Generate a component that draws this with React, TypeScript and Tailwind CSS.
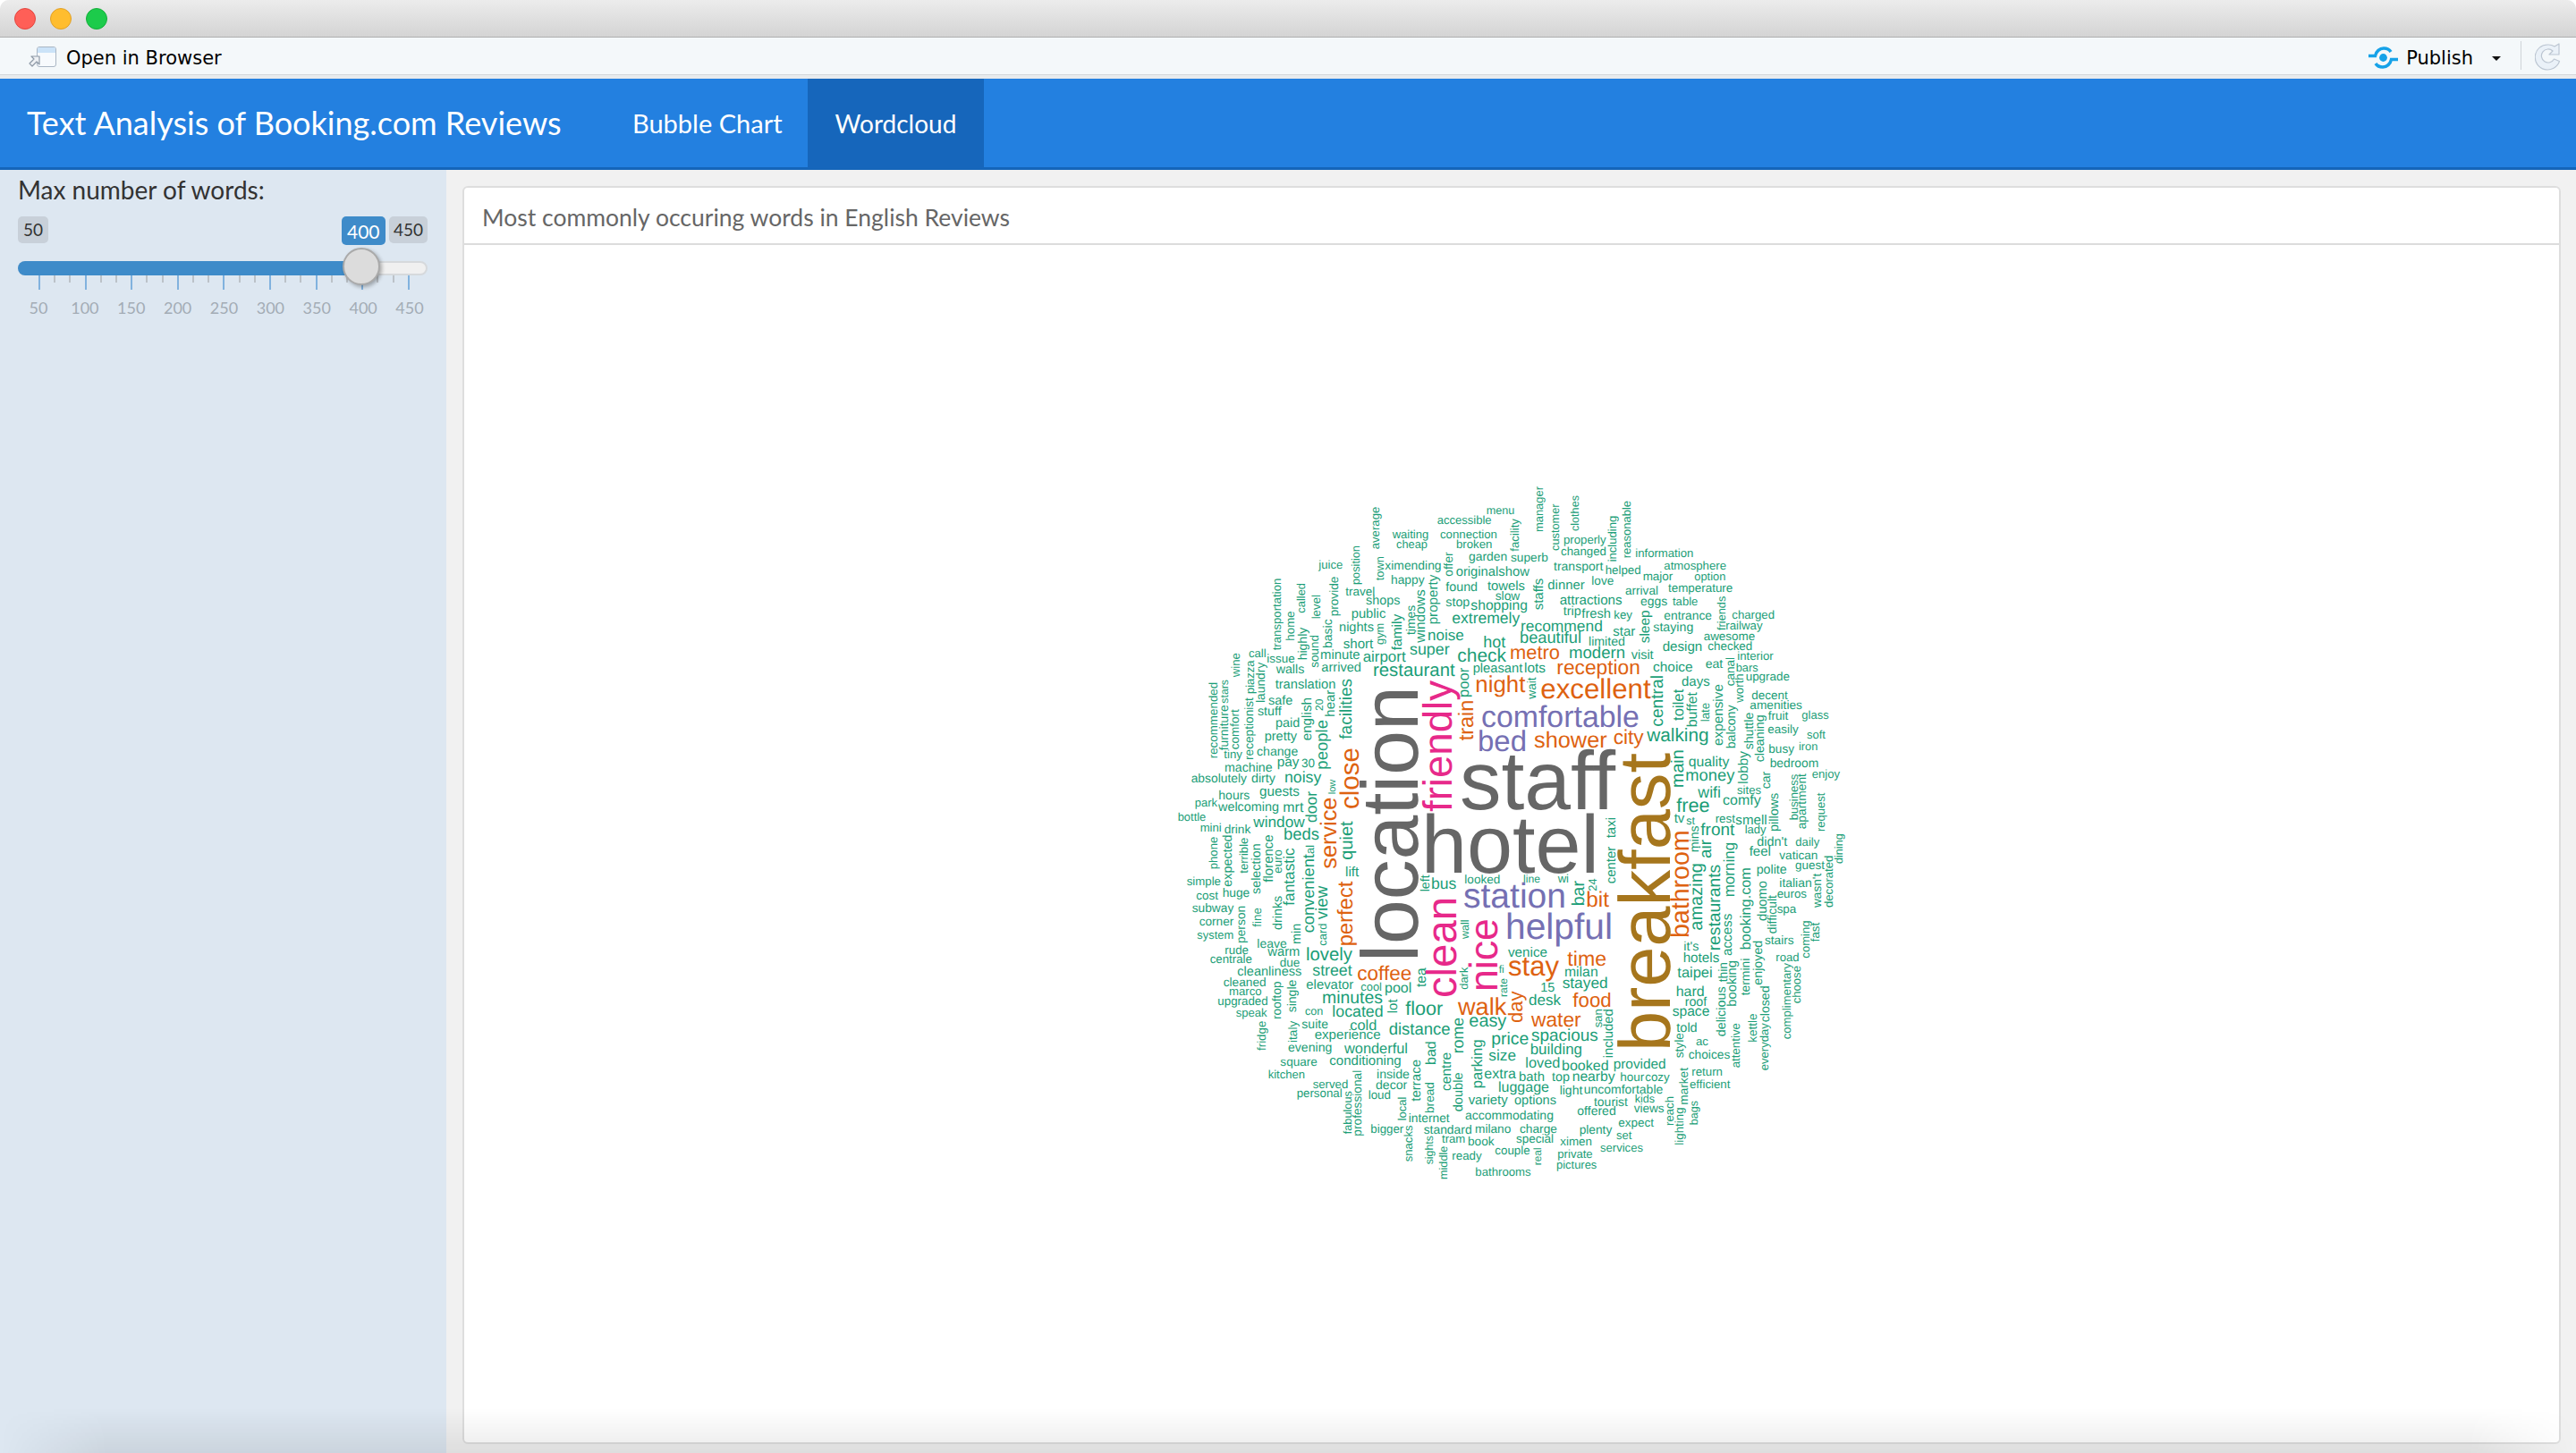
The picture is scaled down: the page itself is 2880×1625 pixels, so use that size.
const TEAL = "#1b9e77";
const ORANGE = "#de6210";
const PURPLE = "#7570b3";
const PINK = "#e7298a";
const GOLD = "#a6761d";
const GRAY = "#666666";

// word, then in crop pixels: horizontal = x1, x2, baseline; vertical (v=1) = baseline, bottom, top
type W = [string, number, number, number, number?, string?];

const topLeft: W[] = [
  ["menu", 1085, 1180, 165], ["accessible", 920, 1103, 198], ["waiting", 770, 892, 245], ["connection", 930, 1122, 246],
  ["cheap", 783, 888, 280], ["broken", 984, 1105, 279], ["garden", 1026, 1156, 320], ["juice", 523, 604, 348],
  ["ximending", 745, 935, 350], ["originalshow", 983, 1230, 372], ["happy", 765, 878, 400], ["found", 949, 1056, 423],
  ["towels", 1089, 1215, 419], ["travel", 613, 712, 438], ["shops", 681, 796, 468], ["slow", 1115, 1198, 452],
  ["stop", 949, 1030, 474], ["shopping", 1033, 1224, 485], ["public", 632, 748, 512], ["extremely", 970, 1198, 530],
  ["nights", 591, 708, 558], ["noise", 888, 1010, 587], ["short", 605, 706, 615], ["hot", 1075, 1150, 612],
  ["super", 828, 962, 637], ["check", 988, 1152, 660], ["minute", 528, 662, 652], ["airport", 671, 815, 660],
  ["arrived", 532, 666, 693], ["issue", 349, 443, 663], ["walls", 380, 475, 699], ["call", 288, 347, 644],
  ["restaurant", 705, 980, 708], ["pleasant", 1040, 1207, 695], ["translation", 377, 580, 750], ["safe", 354, 436, 803],
  ["stuff", 318, 398, 840], ["paid", 378, 460, 880], ["pretty", 341, 450, 925], ["change", 315, 454, 975],
  ["tiny", 205, 267, 983], ["pay", 383, 457, 1010], ["30", 465, 510, 1015], ["machine", 207, 368, 1030],
  ["absolutely", 95, 282, 1064], ["dirty", 297, 378, 1064], ["noisy", 408, 532, 1065], ["hours", 187, 292, 1122],
  ["guests", 324, 459, 1110], ["park", 107, 183, 1146], ["welcoming", 186, 390, 1160], ["mrt", 403, 472, 1165],
  ["bottle", 50, 145, 1195], ["mini", 125, 197, 1230], ["drink", 206, 295, 1237], ["window", 304, 476, 1215],
  ["beds", 405, 525, 1258],
  ["average", 727, 283, 140, 1], ["facility", 1195, 290, 180, 1], ["position", 660, 402, 270, 1], ["town", 742, 388, 306, 1],
  ["offer", 972, 374, 292, 1], ["transportation", 397, 622, 380, 1], ["called", 478, 497, 396, 1], ["provide", 587, 508, 374, 1],
  ["level", 527, 517, 435, 1], ["home", 440, 590, 490, 1], ["property", 920, 535, 368, 1], ["windows", 878, 596, 418, 1],
  ["times", 845, 570, 470, 1], ["family", 800, 622, 500, 1], ["gym", 742, 603, 530, 1], ["basic", 568, 615, 517, 1],
  ["highly", 482, 655, 545, 1], ["sound", 522, 680, 570, 1], ["wine", 258, 712, 630, 1], ["piazza", 305, 768, 655, 1],
  ["laundry", 342, 798, 662, 1], ["recommended", 183, 985, 728, 1], ["stars", 218, 800, 720, 1], ["furniture", 218, 958, 805, 1],
  ["comfort", 255, 955, 820, 1], ["receptionist", 302, 990, 780, 1], ["english", 497, 925, 780, 1], ["20", 538, 825, 785, 1],
  ["hear", 577, 845, 755, 1], ["people", 552, 1022, 855, 1], ["facilities", 633, 920, 717, 1], ["poor", 1025, 780, 680, 1],
  ["train", 1042, 925, 788, 1, ORANGE], ["low", 580, 1105, 1055, 1], ["door", 515, 1200, 1095, 1], ["close", 657, 1155, 948, 1, ORANGE],
  ["night", 1048, 1216, 762, 0, ORANGE],
];

const topRight: W[] = [
  ["properly", 144, 287, 265], ["changed", 135, 288, 303], ["information", 385, 580, 308], ["transport", 111, 277, 353],
  ["helped", 284, 404, 365], ["atmosphere", 481, 690, 350], ["major", 410, 511, 388], ["option", 583, 688, 388],
  ["dinner", 91, 215, 418], ["love", 238, 313, 403], ["arrival", 351, 462, 435], ["temperature", 495, 712, 427],
  ["attractions", 131, 341, 467], ["eggs", 402, 493, 472], ["table", 510, 595, 470], ["trip", 143, 203, 503],
  ["fresh", 205, 303, 513], ["key", 313, 375, 517], ["entrance", 481, 642, 518], ["charged", 709, 852, 515],
  ["railway", 688, 812, 552], ["star", 310, 385, 572], ["staying", 445, 580, 557], ["limited", 228, 351, 605],
  ["awesome", 614, 787, 587], ["design", 476, 610, 625], ["checked", 628, 778, 622], ["modern", 162, 351, 648],
  ["visit", 371, 446, 650], ["interior", 727, 848, 655], ["choice", 444, 578, 692], ["eat", 620, 679, 680],
  ["bars", 722, 797, 692], ["upgrade", 755, 903, 723], ["days", 540, 635, 742], ["decent", 775, 896, 785],
  ["amenities", 769, 945, 820], ["fruit", 830, 898, 855], ["glass", 943, 1034, 852], ["easily", 829, 932, 900],
  ["soft", 960, 1023, 918], ["busy", 832, 918, 965], ["iron", 933, 997, 957], ["walking", 424, 632, 927],
  ["quality", 563, 700, 1012], ["bedroom", 836, 1000, 1013], ["money", 553, 718, 1060], ["enjoy", 977, 1071, 1050],
  ["wifi", 595, 672, 1115], ["sites", 726, 807, 1103], ["comfy", 678, 806, 1140], ["free", 523, 635, 1165],
  ["tv", 515, 550, 1200], ["st", 556, 585, 1205], ["rest", 653, 720, 1200], ["smell", 721, 827, 1207],
  ["front", 604, 718, 1243], ["lady", 752, 824, 1235],
  ["reception", 121, 402, 703, 0, ORANGE], ["excellent", 67, 437, 782, 0, ORANGE], ["shower", 45, 290, 948, 0, ORANGE], ["city", 311, 413, 935, 0, ORANGE],
  ["manager", 76, 225, 72, 1], ["customer", 130, 288, 130, 1], ["clothes", 195, 222, 102, 1], ["including", 320, 325, 170, 1],
  ["reasonable", 369, 313, 120, 1], ["staffs", 75, 487, 380, 1], ["sleep", 432, 598, 487, 1], ["friends", 688, 555, 440, 1],
  ["canal", 718, 742, 645, 1], ["worth", 748, 797, 700, 1], ["central", 478, 878, 705, 1], ["toilet", 545, 858, 752, 1],
  ["buffet", 592, 880, 762, 1], ["late", 632, 862, 797, 1], ["expensive", 677, 942, 735, 1], ["balcony", 720, 952, 805, 1],
  ["shuttle", 780, 955, 830, 1], ["cleaning", 815, 997, 838, 1], ["lobby", 762, 1070, 960, 1], ["main", 545, 1083, 955, 1],
  ["car", 837, 1087, 1028, 1], ["pillows", 865, 1230, 1100, 1], ["business", 930, 1192, 1037, 1], ["apartment", 957, 1222, 1035, 1],
  ["request", 1020, 1230, 1100, 1], ["taxi", 318, 1252, 1182, 1], ["wait", 52, 785, 712, 1],
];

const bottomLeft: W[] = [
  ["lift", 612, 658, 180], ["simple", 80, 195, 210], ["cost", 112, 186, 257], ["huge", 200, 292, 248], ["subway", 98, 238, 300],
  ["corner", 122, 238, 345], ["system", 115, 238, 390], ["leave", 316, 416, 420], ["rude", 208, 288, 440], ["warm", 352, 460, 447],
  ["centrale", 158, 300, 470], ["due", 392, 460, 482], ["cleanliness", 250, 466, 513], ["lovely", 480, 636, 462],
  ["street", 502, 635, 512], ["cleaned", 203, 347, 550], ["elevator", 481, 640, 558], ["marco", 222, 332, 578],
  ["cool", 664, 735, 565], ["pool", 744, 835, 570], ["minutes", 534, 738, 605], ["upgraded", 184, 353, 613],
  ["speak", 245, 350, 652], ["con", 477, 538, 645], ["located", 568, 740, 652], ["floor", 814, 940, 645],
  ["suite", 466, 555, 690], ["cold", 628, 718, 695], ["experience", 509, 731, 727], ["distance", 758, 965, 712],
  ["evening", 420, 568, 767], ["wonderful", 609, 822, 773], ["square", 394, 519, 815], ["conditioning", 559, 800, 812],
  ["kitchen", 353, 477, 858], ["inside", 717, 828, 858], ["decor", 714, 820, 893], ["served", 503, 622, 892],
  ["personal", 449, 602, 920], ["loud", 689, 765, 926], ["size", 1093, 1185, 797], ["price", 1102, 1228, 745],
  ["extra", 1078, 1185, 858], ["easy", 1027, 1153, 683], ["fi", 1127, 1145, 505], ["bus", 900, 985, 222],
  ["looked", 1012, 1132, 203], ["variety", 1025, 1157, 945], ["milano", 1047, 1168, 1040], ["standard", 875, 1037, 1043],
  ["internet", 824, 962, 1006], ["tram", 936, 1015, 1073], ["book", 1023, 1112, 1083], ["couple", 1114, 1232, 1112],
  ["ready", 970, 1070, 1130], ["bathrooms", 1048, 1235, 1185], ["bigger", 697, 808, 1040],
  ["coffee", 652, 835, 528, 0, ORANGE], ["walk", 990, 1153, 645, 0, ORANGE],
  ["phone", 182, 157, 47, 1], ["expected", 232, 215, 40, 1], ["terrible", 285, 170, 50, 1], ["selection", 327, 240, 70, 1],
  ["florence", 370, 200, 40, 1], ["euro", 398, 170, 90, 1], ["fantastic", 440, 278, 85, 1], ["convenient", 507, 370, 105, 1],
  ["al", 507, 105, 75, 1], ["view", 553, 325, 212, 1], ["person", 275, 405, 278, 1], ["fine", 330, 350, 285, 1],
  ["drinks", 398, 360, 245, 1], ["min", 462, 408, 338, 1], ["card", 550, 413, 338, 1], ["lot", 785, 640, 592, 1],
  ["rooftop", 395, 660, 532, 1], ["single", 447, 637, 527, 1], ["fridge", 345, 765, 665, 1], ["italy", 450, 738, 665, 1],
  ["fabulous", 632, 1045, 900, 1], ["professional", 667, 1052, 830, 1], ["terrace", 865, 935, 795, 1], ["bad", 915, 813, 733, 1],
  ["bread", 910, 975, 870, 1], ["centre", 965, 900, 770, 1], ["rome", 1007, 775, 653, 1], ["double", 1005, 970, 838, 1],
  ["parking", 1072, 892, 727, 1], ["wall", 1025, 390, 325, 1], ["dark", 1022, 560, 485, 1], ["rate", 1155, 585, 522, 1],
  ["tea", 882, 552, 487, 1], ["left", 893, 232, 175, 1], ["sights", 905, 1147, 1050, 1], ["middle", 953, 1197, 1085, 1],
  ["snacks", 838, 1138, 1015, 1], ["local", 815, 1000, 920, 1],
  ["perfect", 637, 415, 197, 1, ORANGE], ["service", 582, 155, -85, 1, ORANGE], ["quiet", 637, 125, -5, 1],
  ["day", 1205, 672, 565, 1, ORANGE],
];

const bottomRight: W[] = [
  ["wi", 125, 162, 200], ["desk", 27, 135, 612], ["15", 67, 115, 567], ["milan", 147, 260, 515], ["stayed", 140, 293, 555],
  ["spacious", 36, 260, 733], ["building", 32, 207, 778], ["loved", 16, 133, 823], ["booked", 138, 296, 832],
  ["provided", 311, 488, 825], ["top", 105, 165, 867], ["nearby", 173, 317, 866], ["hour", 334, 415, 866], ["cozy", 418, 500, 866],
  ["light", 131, 208, 912], ["uncomfortable", 212, 478, 908], ["tourist", 246, 360, 950], ["kids", 383, 450, 940],
  ["views", 380, 482, 972], ["offered", 190, 320, 980], ["expect", 328, 447, 1020], ["plenty", 197, 307, 1043],
  ["set", 321, 373, 1062], ["ximen", 133, 240, 1083], ["private", 124, 242, 1125], ["services", 267, 411, 1103],
  ["pictures", 120, 256, 1160], ["it's", 547, 598, 430], ["hotels", 545, 667, 468], ["taipei", 526, 644, 520],
  ["polite", 791, 893, 170], ["didn't", 793, 895, 77], ["feel", 767, 840, 110], ["daily", 922, 1003, 78],
  ["vatican", 868, 997, 122], ["guest", 921, 1020, 155], ["italian", 868, 977, 217], ["euros", 860, 960, 252],
  ["spa", 860, 925, 303], ["stairs", 819, 917, 407], ["road", 856, 935, 465], ["hard", 521, 617, 582], ["roof", 551, 625, 615],
  ["space", 509, 634, 648], ["told", 523, 593, 703], ["ac", 588, 630, 747], ["choices", 563, 703, 792], ["return", 574, 678, 848],
  ["efficient", 567, 703, 890],
  ["bit", 220, 297, 282, 0, ORANGE], ["time", 157, 288, 480, 0, ORANGE], ["food", 175, 305, 617, 0, ORANGE], ["water", 36, 203, 683, 0, ORANGE],
  ["bar", 213, 280, 195, 1], ["24", 255, 230, 187, 1], ["center", 318, 205, 80, 1], ["included", 310, 790, 625, 1], ["san", 272, 688, 625, 1],
  ["amazing", 610, 362, 135, 1], ["air", 640, 120, 57, 1], ["mins", 597, 100, 10, 1], ["morning", 718, 250, 65, 1],
  ["restaurants", 670, 430, 140, 1], ["access", 708, 447, 305, 1], ["booking.com", 770, 427, 150, 1], ["thin", 692, 535, 468, 1],
  ["delicious", 688, 718, 550, 1], ["booking", 723, 617, 462, 1], ["termini", 768, 580, 455, 1], ["duomo", 825, 330, 195, 1],
  ["difficult", 858, 373, 243, 1], ["wasn't", 1007, 285, 170, 1], ["decorated", 1047, 285, 110, 1], ["dining", 1080, 138, 37, 1],
  ["coming", 968, 455, 328, 1], ["fast", 1002, 400, 335, 1], ["enjoyed", 810, 545, 395, 1], ["complimentary", 905, 727, 470, 1],
  ["choose", 940, 607, 480, 1], ["closed", 833, 670, 547, 1], ["everyday", 830, 832, 672, 1], ["kettle", 792, 737, 640, 1],
  ["attentive", 735, 823, 672, 1], ["style", 547, 790, 705, 1], ["market", 560, 947, 822, 1], ["reach", 512, 1017, 918, 1],
  ["lighting", 547, 1082, 955, 1], ["bags", 595, 1015, 933, 1], ["real", 70, 1150, 1090, 1],
  ["bathroom", 563, 387, 25, 1, ORANGE],
];

// these run over two crops, so they are in page pixels
const page: W[] = [
  ["superb", 1689, 1731, 628], ["lots", 1704, 1728, 752], ["recommend", 1700, 1792, 706], ["beautiful", 1699, 1768, 719],
  ["line", 1703, 1722, 987], ["venice", 1686, 1730, 1070], ["bath", 1698, 1727, 1209], ["luggage", 1675, 1732, 1221],
  ["options", 1693, 1740, 1235], ["accommodating", 1638, 1737, 1252], ["charge", 1699, 1741, 1267], ["special", 1695, 1737, 1278],
  ["metro", 1688, 1744, 737, 0, ORANGE], ["stay", 1686, 1743, 1091, 0, ORANGE],
  ["comfortable", 1656, 1833, 813, 0, PURPLE], ["bed", 1652, 1707, 840, 0, PURPLE], ["station", 1636, 1751, 1015, 0, PURPLE], ["helpful", 1683, 1803, 1050, 0, PURPLE],
  ["staff", 1632, 1806, 905, 0, GRAY], ["hotel", 1589, 1788, 976, 0, GRAY],
  ["location", 1585, 1076, 767, 1, GRAY], ["breakfast", 1867, 1176, 842, 1, GOLD],
  ["friendly", 1623, 908, 761, 1, PINK], ["clean", 1628, 1116, 1003, 1, PINK], ["nice", 1674, 1109, 1027, 1, PINK],
];

const ctx = document.createElement("canvas").getContext("2d")!;
ctx.font = '100px "Liberation Sans"';

function place(words: W[], ox: number, oy: number, k: number) {
  return words.map(([text, a, b, c, v, color]) => {
    const len = v ? (b - c) / k : (b - a) / k;
    const size = (len / ctx.measureText(text).width) * 100;
    const x = ox + a / k;
    const y = v ? oy + b / k : oy + c / k;
    return { text, x, y, size, v: !!v, color: color || TEAL };
  });
}

const words = [
  ...place(topLeft, 1300, 520, 3),
  ...place(topRight, 1700, 520, 3),
  ...place(bottomLeft, 1300, 920, 3),
  ...place(bottomRight, 1700, 920, 3),
  ...place(page, 0, 0, 1),
];

const tickLabels = [50, 100, 150, 200, 250, 300, 350, 400, 450];
const ticks = Array.from({ length: 25 }, (_, i) => i);

function BrowserIcon() {
  return (
    <svg width="32" height="26" viewBox="0 0 32 26">
      <rect x="9.5" y="1.5" width="21" height="22" rx="2.5" fill="#f7fafd" stroke="#aab6c4" />
      <path d="M10 8V4a2 2 0 0 1 2-2h16a2 2 0 0 1 2 2v4z" fill="#cbe3f8" />
      <path d="M1 20l5-5-3-3h9v9l-3-3-5 5z" fill="#eef1f4" stroke="#8e99a6" strokeWidth="1.2" strokeLinejoin="round" />
    </svg>
  );
}

function PublishIcon() {
  return (
    <svg width="33" height="25" viewBox="0 0 33 25" fill="none" stroke="#16a2e8" strokeWidth="3.5">
      <circle cx="16.5" cy="12.5" r="4.4" fill="#16a2e8" stroke="none" />
      <path d="M0 10.5h7.5c1-5 5-8.5 9.5-8.5 3.5 0 6.5 1.5 8 4" />
      <path d="M33 14.5h-7.5c-1 5-5 8.5-9.5 8.5-3.5 0-6.5-1.5-8-4" />
    </svg>
  );
}

function RefreshIcon() {
  return (
    <svg width="30" height="32" viewBox="0 0 30 32">
      <path
        d="M15 3a13 13 0 0 1 7 2l5-3v12H16l4-4a7.5 7.5 0 1 0 1.5 9l6 2.5A14 14 0 1 1 15 3z"
        fill="#eaf1f8"
        stroke="#bcc6d2"
        strokeWidth="1.2"
        strokeLinejoin="round"
      />
    </svg>
  );
}

function Slider() {
  return (
    <div className="relative ml-[20px] w-[458px]">
      <div className="flex h-[30px] justify-between text-[19px] leading-[30px] text-[#333]">
        <span className="rounded-[5px] bg-[#c8d0d9] px-[6px]">50</span>
        <span className="rounded-[5px] bg-[#c8d0d9] px-[5px]">450</span>
      </div>
      <span className="absolute left-[362px] top-0 h-[32px] rounded-[5px] bg-[#3e8bc9] px-[6px] text-[21px] leading-[33px] text-white">400</span>
      <div className="mt-[20px] h-[16px] rounded-full border-2 border-[#d6d9dc] bg-[#f0f0f0]">
        <div className="-m-[2px] h-[16px] w-[384px] rounded-l-full bg-[#3e8bc9]" />
      </div>
      <div className="ml-[23px] flex w-[415px] justify-between">
        {ticks.map((i) =>
          i % 3 === 0 ? (
            <div key={i} className="h-[16px] w-[2px] bg-[#81b2de]" />
          ) : (
            <div key={i} className="h-[8px] w-[2px] bg-[#bcc2c8]" />
          ),
        )}
      </div>
      <div className="ml-[23px] mt-[9px] flex w-[415px] justify-between text-[18px] leading-[22px] text-[#a3acb5]">
        {tickLabels.map((t) => (
          <span key={t} className="flex w-0 justify-center">
            {t}
          </span>
        ))}
      </div>
      <div className="absolute left-[363px] top-[35px] h-[42px] w-[42px] rounded-full border-2 border-[#aaa] bg-[#dcdcdc] shadow-[2px_2px_4px_rgba(0,0,0,0.3)]" />
    </div>
  );
}

export default function App() {
  return (
    <div className="relative flex h-[1625px] w-[2880px] flex-col overflow-hidden rounded-t-[10px] bg-[#f1f1f1] font-['Lato',sans-serif]">
      <div className="flex h-[42px] items-center gap-[16px] border-b border-[#aeaeae] bg-gradient-to-b from-[#ececec] to-[#d4d4d4] pl-[16px]">
        <div className="h-[24px] w-[24px] rounded-full border border-[#e2463f] bg-[#ff5f57]" />
        <div className="h-[24px] w-[24px] rounded-full border border-[#e0a028] bg-[#ffbd2e]" />
        <div className="h-[24px] w-[24px] rounded-full border border-[#14ae3a] bg-[#1ccb4b]" />
      </div>

      <div className="flex h-[46px] items-start border-b-[4px] border-[#e8ebed] bg-[#f4f8fa] shadow-[inset_0_-1px_0_#d3d8db]">
        <div className="ml-[32px] mt-[9px]">
          <BrowserIcon />
        </div>
        <span className="ml-[10px] mt-[10px] font-['DejaVu_Sans',sans-serif] text-[21px] leading-[26px] text-black">Open in Browser</span>
        <div className="ml-auto mt-[10px]">
          <PublishIcon />
        </div>
        <span className="ml-[9px] mt-[10px] font-['DejaVu_Sans',sans-serif] text-[21px] leading-[26px] text-black">Publish</span>
        <div className="ml-[21px] mt-[21px] h-0 w-0 border-x-[5px] border-t-[5px] border-x-transparent border-t-[#111]" />
        <div className="ml-[22px] mt-[4px] h-[32px] w-[1px] bg-[#cfd4d8]" />
        <div className="ml-[15px] mt-[5px] mr-[16px]">
          <RefreshIcon />
        </div>
      </div>

      <div className="flex h-[102px] items-stretch border-b-[3px] border-[#1565b9] bg-[#2380e0] text-white">
        <div className="ml-[30px] pt-[26px] text-[36px] leading-[46px]">Text Analysis of Booking.com Reviews</div>
      </div>

      <div className="flex flex-1">
        <aside className="w-[499px] bg-[#dde7f1] pt-[5px]">
          <div className="ml-[20px] text-[28px] leading-[34px] text-[#333]">Max number of words:</div>
          <div className="mt-[13px]">
            <Slider />
          </div>
        </aside>

        <main className="flex-1 pl-[18px] pr-[17px] pt-[18px] pb-[10px]">
          <div className="flex h-full flex-col rounded-[6px] border-2 border-[#dedede] bg-white">
            <div className="h-[64px] border-b-2 border-[#dcdcdc] pl-[20px] pt-[16px] text-[26.5px] leading-[34px] text-[#666]">
              Most commonly occuring words in English Reviews
            </div>
            <div className="flex-1">
              <svg
                width="840"
                height="840"
                viewBox="1300 500 840 840"
                textRendering="geometricPrecision"
                className="ml-[781px] mt-[226px] font-['Liberation_Sans',sans-serif]"
              >
                {words.map((w, i) => (
                  <text
                    key={i}
                    x={w.x}
                    y={w.y}
                    fontSize={w.size}
                    fill={w.color}
                    transform={w.v ? `rotate(-90 ${w.x} ${w.y})` : undefined}
                  >
                    {w.text}
                  </text>
                ))}
              </svg>
            </div>
          </div>
        </main>
      </div>

      <div className="absolute left-[707px] top-[88px] flex h-[100px] w-[196px] items-center text-[29px] text-white">Bubble Chart</div>
      <div className="absolute left-[903px] top-[88px] flex h-[100px] w-[197px] items-center justify-center bg-[#1666bb] text-[28px] text-white">Wordcloud</div>

      <div className="pointer-events-none absolute inset-x-0 bottom-0 h-[50px] bg-gradient-to-t from-black/[0.08] to-transparent [mask-image:linear-gradient(90deg,transparent,black_120px,black_calc(100%-120px),transparent)]" />
    </div>
  );
}
